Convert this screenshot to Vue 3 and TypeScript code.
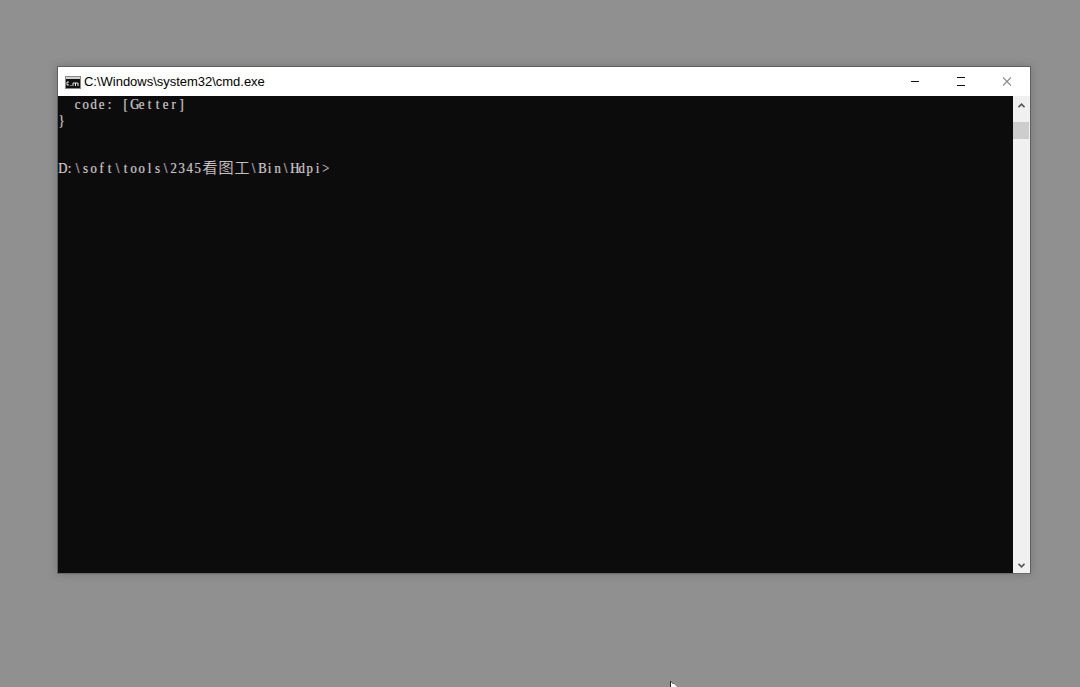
<script setup lang="ts">
interface Row { id: number; text: string }
const rows: Row[] = [
  { id: 1, text: '  code: [Getter]' },
  { id: 2, text: '}' },
  { id: 3, text: '' },
  { id: 4, text: '' },
  { id: 5, text: 'D:\\soft\\tools\\2345看图工\\Bin\\Hdpi>' },
]
const cells = (t: string) => Array.from(t)
const isWide = (c: string) => c.charCodeAt(0) > 255
</script>

<template>
  <div class="desktop">
    <section class="window">
      <header class="titlebar">
        <svg class="appicon" width="16" height="13" viewBox="0 0 16 13">
          <rect x="0" y="0" width="16" height="13" fill="#8a8a8a" />
          <rect x="1" y="1" width="14" height="2" fill="#d0d0d0" />
          <rect x="1" y="3" width="14" height="9" fill="#111" />
          <path d="M2 6h2M2 6v3M2 9h2M5.5 9.5h1M8 7h5M8 7v3M10.5 7v3M13 7v3" stroke="#e8e8e8" stroke-width="1" fill="none" />
        </svg>
        <span class="title">C:\Windows\system32\cmd.exe</span>
        <div class="controls">
          <div class="ctl"><svg width="8" height="9" viewBox="0 0 8 9"><path d="M0 4.5h8" stroke="#111" /></svg></div>
          <div class="ctl"><svg width="8" height="9" viewBox="0 0 8 9"><path d="M0 .5h8M0 8.5h8" stroke="#111" /></svg></div>
          <div class="ctl"><svg width="8" height="9" viewBox="0 0 8 9"><path d="M0 .5l8 8M8 .5l-8 8" stroke="#333" stroke-width="1.1" opacity=".6" /></svg></div>
        </div>
      </header>
      <div class="body">
        <div class="console">
          <div v-for="r in rows" :key="r.id" class="row">
            <span v-for="(c, i) in cells(r.text)" :key="i" class="cell" :class="{ wide: isWide(c) }">{{ c }}</span>
          </div>
        </div>
        <aside class="scrollbar">
          <div class="arrow"><svg width="7" height="5" viewBox="0 0 7 5"><path d="M.5 4.2l3-3 3 3" stroke="#555" stroke-width="1.6" fill="none" /></svg></div>
          <div class="thumb"></div>
          <div class="track"></div>
          <div class="arrow"><svg width="7" height="5" viewBox="0 0 7 5"><path d="M.5 .8l3 3 3-3" stroke="#555" stroke-width="1.6" fill="none" /></svg></div>
        </aside>
      </div>
    </section>
    <svg class="pointer" width="10" height="6" viewBox="0 0 10 6"><path d="M1 0v6h6z" fill="#fff" /><path d="M.5 0v6M.5 0l3 3" stroke="#222" fill="none" /></svg>
  </div>
</template>

<style scoped>
.desktop {
  position: relative;
  box-sizing: border-box;
  width: 1080px;
  height: 687px;
  overflow: hidden;
  padding: 66px 49px 0 57px;
  background: #909090;
}
.window {
  box-sizing: border-box;
  width: 974px;
  height: 508px;
  display: flex;
  flex-direction: column;
  border: 1px solid #5e5e5e;
  border-bottom-color: #6a6a6a;
  background: #fff;
  box-shadow: 0 0 8px rgba(60, 60, 60, .3);
}
.titlebar {
  flex: none;
  height: 29px;
  display: flex;
  align-items: center;
  padding-left: 7px;
  background: #fff;
}
.appicon { flex: none; margin-top: 1px; }
.title {
  margin-left: 3px;
  font: 13px/16px "Liberation Sans", Arial, sans-serif;
  color: #000;
  white-space: nowrap;
  letter-spacing: -.02px;
}
.controls { display: flex; margin-left: auto; align-self: flex-start; }
.ctl {
  width: 46px;
  height: 29px;
  box-sizing: border-box;
  padding-top: 10px;
  display: flex;
  justify-content: center;
  align-items: flex-start;
}
.body { flex: 1; min-height: 0; display: flex; }
.console {
  flex: 1;
  background: #0c0c0c;
  color: #c4c4c4;
  font: 15px/16px "Liberation Serif", "Noto Sans CJK SC", serif;
  text-shadow: .4px 0 rgba(225, 135, 60, .5), -.4px 0 rgba(90, 150, 230, .5);
}
.row { display: flex; height: 16px; white-space: pre; }
.cell { flex: none; width: 8px; text-align: center; transform: scaleX(.85) translateX(-.5px); }
.wide { width: 16px; font-size: 15px; font-weight: 300; color: #d4d4d4; transform: none; }
.scrollbar {
  flex: none;
  width: 17px;
  display: flex;
  flex-direction: column;
  background: #f0f0f0;
}
.arrow {
  flex: none;
  height: 17px;
  box-sizing: border-box;
  padding-top: 2px;
  display: flex;
  align-items: center;
  justify-content: center;
}
.thumb { flex: none; height: 17px; margin: 9px 1px 0 0; background: #cdcdcd; }
.track { flex: 1; }
.pointer { position: absolute; left: 670px; top: 681px; }
</style>
